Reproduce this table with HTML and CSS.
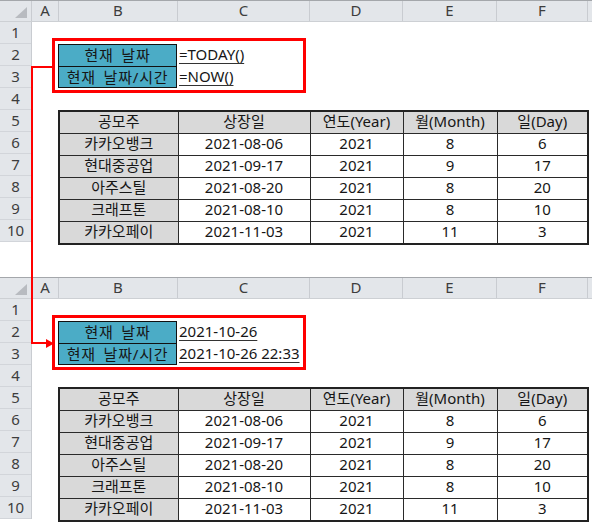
FILE: index.html
```html
<!DOCTYPE html>
<html lang="ko">
<head>
    <meta charset="UTF-8">
    <title>TODAY / NOW 함수</title>
    <link rel="stylesheet" href="styles.css">
</head>
<body>
    <div class="page">
        <!-- Sheet with formulas -->
        <div class="sheet">
            <div class="colhead">
                <div class="corner">
                    <svg width="12" height="11" viewBox="0 0 12 11"><polygon points="12,0 12,11 0,11" fill="#b8bbc0"/></svg>
                </div>
                <div>A</div><div>B</div><div>C</div><div>D</div><div>E</div><div>F</div><div class="fill"></div>
            </div>
            <div class="body">
                <div class="rowhead">
                    <div>1</div><div>2</div><div>3</div><div>4</div><div>5</div>
                    <div>6</div><div>7</div><div>8</div><div>9</div><div>10</div>
                </div>
                <div class="cells">
                    <div class="labels">
                        <div>현재 날짜</div>
                        <div>현재 날짜/시간</div>
                    </div>
                    <div class="val row2"><span>=TODAY()</span></div>
                    <div class="val row3"><span>=NOW()</span></div>
                    <table class="ipo">
                        <colgroup><col class="c-b"><col class="c-c"><col class="c-d"><col class="c-e"><col class="c-f"></colgroup>
                        <tr class="head"><td>공모주</td><td>상장일</td><td>연도(Year)</td><td>월(Month)</td><td>일(Day)</td></tr>
                        <tr><td>카카오뱅크</td><td>2021-08-06</td><td>2021</td><td>8</td><td>6</td></tr>
                        <tr><td>현대중공업</td><td>2021-09-17</td><td>2021</td><td>9</td><td>17</td></tr>
                        <tr><td>아주스틸</td><td>2021-08-20</td><td>2021</td><td>8</td><td>20</td></tr>
                        <tr><td>크래프톤</td><td>2021-08-10</td><td>2021</td><td>8</td><td>10</td></tr>
                        <tr><td>카카오페이</td><td>2021-11-03</td><td>2021</td><td>11</td><td>3</td></tr>
                    </table>
                </div>
            </div>
            <div class="redbox"></div>
        </div>

        <!-- Sheet with results -->
        <div class="sheet">
            <div class="colhead">
                <div class="corner">
                    <svg width="12" height="11" viewBox="0 0 12 11"><polygon points="12,0 12,11 0,11" fill="#b8bbc0"/></svg>
                </div>
                <div>A</div><div>B</div><div>C</div><div>D</div><div>E</div><div>F</div><div class="fill"></div>
            </div>
            <div class="body">
                <div class="rowhead">
                    <div>1</div><div>2</div><div>3</div><div>4</div><div>5</div>
                    <div>6</div><div>7</div><div>8</div><div>9</div><div>10</div>
                </div>
                <div class="cells">
                    <div class="labels">
                        <div>현재 날짜</div>
                        <div>현재 날짜/시간</div>
                    </div>
                    <div class="val row2"><span>2021-10-26</span></div>
                    <div class="val row3"><span>2021-10-26 22:33</span></div>
                    <table class="ipo">
                        <colgroup><col class="c-b"><col class="c-c"><col class="c-d"><col class="c-e"><col class="c-f"></colgroup>
                        <tr class="head"><td>공모주</td><td>상장일</td><td>연도(Year)</td><td>월(Month)</td><td>일(Day)</td></tr>
                        <tr><td>카카오뱅크</td><td>2021-08-06</td><td>2021</td><td>8</td><td>6</td></tr>
                        <tr><td>현대중공업</td><td>2021-09-17</td><td>2021</td><td>9</td><td>17</td></tr>
                        <tr><td>아주스틸</td><td>2021-08-20</td><td>2021</td><td>8</td><td>20</td></tr>
                        <tr><td>크래프톤</td><td>2021-08-10</td><td>2021</td><td>8</td><td>10</td></tr>
                        <tr><td>카카오페이</td><td>2021-11-03</td><td>2021</td><td>11</td><td>3</td></tr>
                    </table>
                </div>
            </div>
            <div class="redbox"></div>
        </div>

        <!-- Red connector arrow between the two boxes -->
        <svg class="connector" width="60" height="360" viewBox="0 0 60 360">
            <polyline points="53,67 32,67 32,343 47,343" fill="none" stroke="#ff0000" stroke-width="2"/>
            <polygon points="46,339 54,343.5 46,348" fill="#ff0000"/>
        </svg>
    </div>
</body>
</html>
```

FILE: styles.css
```css
body {
    margin: 0;
    background: #fff;
    font-family: "Noto Sans", "Noto Sans CJK KR", sans-serif;
    font-size: 15px;
    color: #161616;
}

.page {
    position: relative;
    width: 592px;
    height: 522px;
    overflow: hidden;
    background: #fff;
}

.sheet {
    position: relative;
}

.sheet + .sheet {
    margin-top: 35px;
}

/* column letters */
.colhead {
    display: grid;
    grid-template-columns: 32px 27px 119px 132px 93px 94px 91px 1fr;
    height: 22px;
    background: #e3e6ea;
    border-top: 1px solid #a4a7ab;
    border-bottom: 1px solid #cdd0d4;
    box-sizing: border-box;
}

.colhead div {
    border-right: 1px solid #c9ccd1;
    text-align: center;
    line-height: 18px;
    color: #3d3d3d;
}

.colhead .corner {
    display: flex;
    align-items: flex-end;
    justify-content: flex-end;
    padding: 0 4px 3px 0;
}

.colhead .fill {
    border-right: none;
}

.body {
    display: flex;
}

/* row numbers */
.rowhead {
    width: 32px;
    display: grid;
    grid-template-rows: repeat(10, 22px);
    background: #e3e6ea;
    border-right: 1px solid #c9ccd1;
    box-sizing: border-box;
}

.rowhead div {
    border-bottom: 1px solid #d2d5da;
    text-align: center;
    line-height: 20px;
    color: #3d3d3d;
}

.cells {
    flex: 1;
    display: grid;
    grid-template-columns: 26px 119px 132px 93px 94px 91px 1fr;
    grid-template-rows: repeat(10, 22px);
}

.labels {
    grid-column: 2;
    grid-row: 2 / 4;
    display: grid;
    grid-template-rows: 1fr 1fr;
    background: #4bacc6;
    border: 1px solid #111;
}

.labels div {
    text-align: center;
    line-height: 20px;
    letter-spacing: 0.8px;
    word-spacing: 3px;
}

.labels div + div {
    border-top: 1px solid #111;
}

.val {
    grid-column: 3;
    padding-left: 2px;
    line-height: 21px;
    white-space: nowrap;
}

.val.row2 {
    grid-row: 2;
}

.val.row3 {
    grid-row: 3;
}

.val span {
    text-decoration: underline;
    text-decoration-color: #333;
    text-underline-offset: 3px;
}

.ipo {
    grid-column: 2 / 7;
    grid-row: 5 / 11;
    width: 100%;
    height: 100%;
    border-collapse: collapse;
    table-layout: fixed;
    border: 2px solid #222;
}

.ipo .c-b { width: 119px; }
.ipo .c-c { width: 132px; }
.ipo .c-d { width: 93px; }
.ipo .c-e { width: 94px; }
.ipo .c-f { width: 91px; }

.ipo td {
    border: 1px solid #2a2a2a;
    padding: 0 0 2px;
    height: 19px;
    text-align: center;
    line-height: 19px;
    white-space: nowrap;
}

.ipo td:first-child,
.ipo .head td {
    background: #d9d9d9;
}

/* red highlight around the B2:C3 block */
.redbox {
    position: absolute;
    left: 52px;
    top: 38px;
    width: 254px;
    height: 55px;
    border: 3px solid #ff0000;
    box-sizing: border-box;
}

.connector {
    position: absolute;
    left: 0;
    top: 0;
}
```
